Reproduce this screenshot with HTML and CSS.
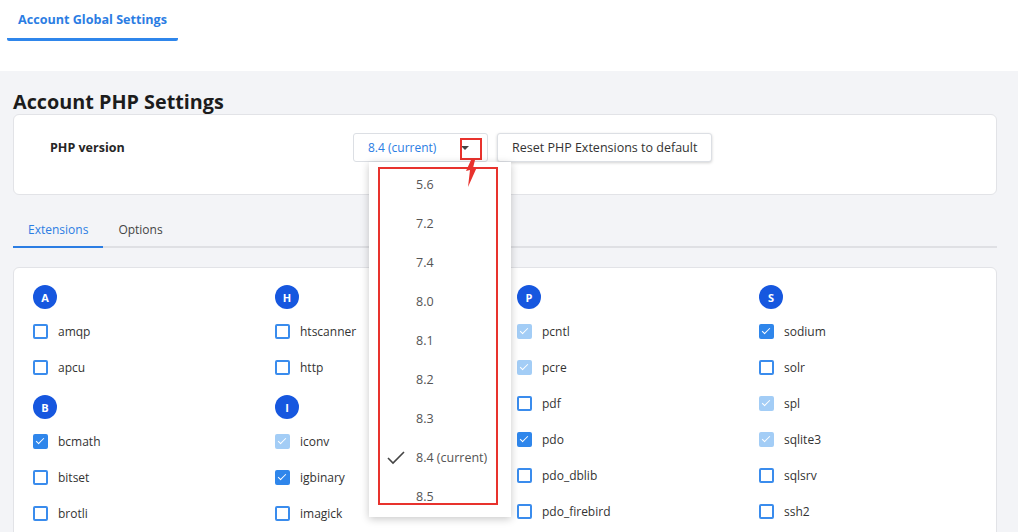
FILE: index.html
```html
<!DOCTYPE html>
<html lang="en">

<head>
    <meta charset="UTF-8">
    <meta name="viewport" content="width=device-width, initial-scale=1.0">
    <title>Account PHP Settings</title>
    <link rel="stylesheet" href="styles.css">
</head>

<body>
    <div class="top-bar">
        <span class="top-tab">Account Global Settings</span>
    </div>

    <div class="main">
        <h1 class="page-title">Account PHP Settings</h1>

        <div class="card version-card">
            <span class="version-label">PHP version</span>
            <div class="select-wrap">
                <div class="select">
                    <span class="select-value">8.4 (current)</span>
                    <span class="caret"></span>
                </div>
                <span class="mark-caret"></span>
                <svg class="mark-arrow" width="20" height="30" viewBox="0 0 20 30">
                    <polygon points="8,0 12,0 10,8 14,7 5,27 7,10 3,11" fill="#e8322d" />
                </svg>
                <div class="dropdown">
                    <div class="option">5.6</div>
                    <div class="option">7.2</div>
                    <div class="option">7.4</div>
                    <div class="option">8.0</div>
                    <div class="option">8.1</div>
                    <div class="option">8.2</div>
                    <div class="option">8.3</div>
                    <div class="option selected">
                        <svg class="tick" width="18" height="14" viewBox="0 0 18 14">
                            <polyline points="1,7 6,12 17,1" fill="none" stroke="#444" stroke-width="1.6" />
                        </svg>
                        8.4 (current)
                    </div>
                    <div class="option">8.5</div>
                </div>
                <span class="mark-box"></span>
            </div>
            <button class="reset-button">Reset PHP Extensions to default</button>
        </div>

        <div class="tabs">
            <span class="tab active">Extensions</span>
            <span class="tab">Options</span>
        </div>

        <div class="card ext-card">
            <div class="ext-col">
                <div class="group">
                    <span class="letter">A</span>
                    <label class="ext"><span class="box"></span>amqp</label>
                    <label class="ext"><span class="box"></span>apcu</label>
                </div>
                <div class="group">
                    <span class="letter">B</span>
                    <label class="ext"><span class="box checked"></span>bcmath</label>
                    <label class="ext"><span class="box"></span>bitset</label>
                    <label class="ext"><span class="box"></span>brotli</label>
                </div>
            </div>
            <div class="ext-col">
                <div class="group">
                    <span class="letter">H</span>
                    <label class="ext"><span class="box"></span>htscanner</label>
                    <label class="ext"><span class="box"></span>http</label>
                </div>
                <div class="group">
                    <span class="letter">I</span>
                    <label class="ext"><span class="box checked locked"></span>iconv</label>
                    <label class="ext"><span class="box checked"></span>igbinary</label>
                    <label class="ext"><span class="box"></span>imagick</label>
                </div>
            </div>
            <div class="ext-col">
                <div class="group">
                    <span class="letter">P</span>
                    <label class="ext"><span class="box checked locked"></span>pcntl</label>
                    <label class="ext"><span class="box checked locked"></span>pcre</label>
                    <label class="ext"><span class="box"></span>pdf</label>
                    <label class="ext"><span class="box checked"></span>pdo</label>
                    <label class="ext"><span class="box"></span>pdo_dblib</label>
                    <label class="ext"><span class="box"></span>pdo_firebird</label>
                </div>
            </div>
            <div class="ext-col">
                <div class="group">
                    <span class="letter">S</span>
                    <label class="ext"><span class="box checked"></span>sodium</label>
                    <label class="ext"><span class="box"></span>solr</label>
                    <label class="ext"><span class="box checked locked"></span>spl</label>
                    <label class="ext"><span class="box checked locked"></span>sqlite3</label>
                    <label class="ext"><span class="box"></span>sqlsrv</label>
                    <label class="ext"><span class="box"></span>ssh2</label>
                </div>
            </div>
        </div>
    </div>
</body>

</html>
```

FILE: styles.css
```css
body {
    margin: 0;
    font-family: "Open Sans", "Noto Sans", sans-serif;
    font-size: 12.5px;
    color: #333333;
    background-color: #ffffff;
    height: 532px;
    overflow: hidden;
}

.top-bar {
    height: 71px;
    padding-left: 7px;
    box-sizing: border-box;
}

.top-tab {
    display: inline-block;
    padding: 11px 11px 9px;
    line-height: 18px;
    font-size: 12.6px;
    font-weight: 700;
    color: #2b7de3;
    border-bottom: 3px solid #2f86eb;
    border-radius: 0 0 2px 2px;
}

.main {
    width: 1018px;
    height: 461px;
    box-sizing: border-box;
    background-color: #f3f4f7;
    padding: 19px 21px 0 13px;
}

.page-title {
    margin: 0;
    font-size: 19.8px;
    line-height: 24px;
    font-weight: 700;
    color: #1c1c1c;
}

.card {
    background-color: #ffffff;
    border: 1px solid #e2e3e7;
    border-radius: 6px;
}

.version-card {
    display: flex;
    align-items: center;
    padding: 18px 0 32px 36px;
}

.version-label {
    width: 303px;
    font-weight: 700;
    color: #262626;
}

.select-wrap {
    position: relative;
    margin-right: 9px;
}

.select {
    width: 135px;
    height: 29px;
    box-sizing: border-box;
    display: flex;
    align-items: center;
    justify-content: space-between;
    padding: 0 10px 0 14px;
    border: 1px solid #dcdfe4;
    border-radius: 3px;
    background-color: #ffffff;
}

.select-value {
    font-size: 12px;
    color: #2b7de3;
}

.caret {
    width: 0;
    height: 0;
    margin-right: 8px;
    border-left: 4px solid transparent;
    border-right: 4px solid transparent;
    border-top: 4px solid #444444;
}

.mark-caret {
    position: absolute;
    left: 107px;
    top: 5px;
    width: 18px;
    height: 18px;
    border: 2px solid #e8322d;
}

.mark-arrow {
    position: absolute;
    left: 110px;
    top: 27px;
    z-index: 3;
}

.dropdown {
    position: absolute;
    left: 16px;
    top: 29px;
    width: 142px;
    height: 355px;
    padding-top: 3px;
    box-sizing: border-box;
    overflow: hidden;
    background-color: #ffffff;
    box-shadow: 0 2px 8px rgba(0, 0, 0, 0.22);
    z-index: 1;
}

.option {
    position: relative;
    height: 39px;
    line-height: 39px;
    padding-left: 47px;
    color: #555555;
}

.tick {
    position: absolute;
    left: 18px;
    top: 13px;
}

.mark-box {
    position: absolute;
    left: 25px;
    top: 34px;
    width: 116px;
    height: 334px;
    border: 2px solid #e8322d;
    z-index: 2;
}

.reset-button {
    height: 29px;
    padding: 0 14px;
    font-family: inherit;
    font-size: 12.5px;
    color: #333333;
    background-color: #ffffff;
    border: 1px solid #dcdfe4;
    border-radius: 3px;
    box-shadow: 0 1px 3px rgba(0, 0, 0, 0.18);
}

.tabs {
    display: flex;
    margin-top: 16px;
    border-bottom: 2px solid #dfe0e4;
}

.tab {
    padding: 10px 15px 7px;
    line-height: 18px;
    font-size: 12px;
    color: #444444;
    margin-bottom: -2px;
    border-bottom: 2px solid transparent;
}

.tab.active {
    color: #2b7de3;
    border-bottom-color: #2b7de3;
}

.ext-card {
    margin-top: 19px;
    height: 300px;
    display: grid;
    grid-template-columns: repeat(4, 242px);
    padding: 17px 0 0 19px;
    border-radius: 6px 6px 0 0;
}

.ext-col {
    display: flex;
    flex-direction: column;
    gap: 16px;
}

.group {
    display: flex;
    flex-direction: column;
    gap: 12px;
}

.letter {
    width: 24px;
    height: 24px;
    margin-bottom: -2px;
    border-radius: 50%;
    background-color: #1657df;
    color: #ffffff;
    font-size: 11px;
    font-weight: 700;
    display: flex;
    align-items: center;
    justify-content: center;
}

.ext {
    height: 24px;
    display: flex;
    align-items: center;
    gap: 10px;
    font-size: 12px;
    color: #333333;
}

.box {
    width: 15px;
    height: 15px;
    box-sizing: border-box;
    border: 2px solid #3a8ced;
    border-radius: 2px;
    position: relative;
}

.box.checked {
    background-color: #2f86eb;
    border-color: #2f86eb;
}

.box.locked {
    background-color: #a3cdf6;
    border-color: #a3cdf6;
}

.box.checked::after {
    content: "";
    position: absolute;
    left: 3px;
    top: 0px;
    width: 3px;
    height: 7px;
    border-right: 1.5px solid #ffffff;
    border-bottom: 1.5px solid #ffffff;
    transform: rotate(45deg);
}
```
